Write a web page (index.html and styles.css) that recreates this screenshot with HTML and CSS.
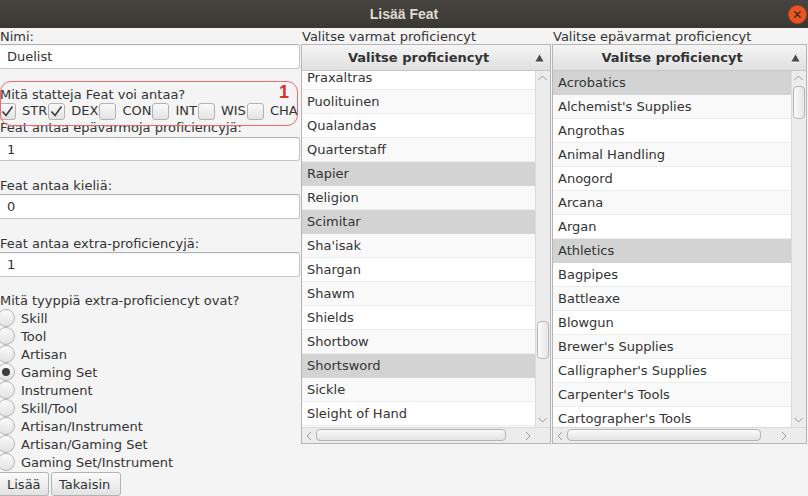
FILE: index.html
```html
<!DOCTYPE html>
<html>
<head>
<meta charset="utf-8">
<link rel="stylesheet" href="styles.css">
</head>
<body>
<div class="window">
  <header class="titlebar">
    <span class="title">Lisää Feat</span>
    <svg class="close" width="19" height="19" viewBox="0 0 19 19"><circle cx="9.5" cy="9.5" r="9" fill="#e95420" stroke="#c7431a" stroke-width="1"/><path d="M6.8 6.8 L12.2 12.2 M12.2 6.8 L6.8 12.2" stroke="#3a2a22" stroke-width="1.4" stroke-linecap="round"/></svg>
  </header>
  <main class="content">
    <section class="left">
      <div class="lbl l-nimi">Nimi:</div>
      <div class="field">Duelist</div>
      <div class="lbl l-stats">Mitä statteja Feat voi antaa?</div>
      <div class="checks">
        <span class="chk"><span class="box first"><svg width="17" height="17" viewBox="0 0 17 17"><path d="M3.5 8.5 L7 12.5 L13.5 3.5" fill="none" stroke="#3a3a3a" stroke-width="1.6"/></svg></span><span class="ctext">STR</span></span>
        <span class="chk"><span class="box"><svg width="17" height="17" viewBox="0 0 17 17"><path d="M3.5 8.5 L7 12.5 L13.5 3.5" fill="none" stroke="#3a3a3a" stroke-width="1.6"/></svg></span><span class="ctext">DEX</span></span>
        <span class="chk"><span class="box"></span><span class="ctext">CON</span></span>
        <span class="chk"><span class="box"></span><span class="ctext">INT</span></span>
        <span class="chk"><span class="box"></span><span class="ctext">WIS</span></span>
        <span class="chk"><span class="box"></span><span class="ctext">CHA</span></span>
      </div>
      <div class="lbl l-epa">Feat antaa epävarmoja proficiencyjä:</div>
      <div class="field f-epa">1</div>
      <div class="lbl l-kieli">Feat antaa kieliä:</div>
      <div class="field f-small">0</div>
      <div class="lbl l-extra">Feat antaa extra-proficiencyjä:</div>
      <div class="field f-small">1</div>
      <div class="lbl l-tyyppi">Mitä tyyppiä extra-proficiencyt ovat?</div>
      <div class="radios">
        <div class="radio"><span class="dot"></span>Skill</div>
        <div class="radio"><span class="dot"></span>Tool</div>
        <div class="radio"><span class="dot"></span>Artisan</div>
        <div class="radio"><span class="dot on"></span>Gaming Set</div>
        <div class="radio"><span class="dot"></span>Instrument</div>
        <div class="radio"><span class="dot"></span>Skill/Tool</div>
        <div class="radio"><span class="dot"></span>Artisan/Instrument</div>
        <div class="radio"><span class="dot"></span>Artisan/Gaming Set</div>
        <div class="radio"><span class="dot"></span>Gaming Set/Instrument</div>
      </div>
      <div class="buttons">
        <button class="btn b-lisaa">Lisää</button>
        <button class="btn b-takaisin">Takaisin</button>
      </div>
      <div class="annot"><span class="annot-num">1</span></div>
    </section>

    <section class="col col-mid">
      <div class="lbl col-lbl">Valitse varmat proficiencyt</div>
      <div class="table">
        <div class="thead"><span class="th-text">Valitse proficiencyt</span><svg class="sort" width="9" height="8" viewBox="0 0 9 8"><path d="M4.5 0.5 L8.5 7.5 L0.5 7.5 Z" fill="#4a4a4a"/></svg></div>
        <div class="tbody">
          <div class="rows-wrap">
            <div class="rows shift">
              <div class="row">Praxaltras</div>
              <div class="row">Puolituinen</div>
              <div class="row">Qualandas</div>
              <div class="row">Quarterstaff</div>
              <div class="row sel">Rapier</div>
              <div class="row">Religion</div>
              <div class="row sel">Scimitar</div>
              <div class="row">Sha'isak</div>
              <div class="row">Shargan</div>
              <div class="row">Shawm</div>
              <div class="row">Shields</div>
              <div class="row">Shortbow</div>
              <div class="row sel">Shortsword</div>
              <div class="row">Sickle</div>
              <div class="row">Sleight of Hand</div>
            </div>
          </div>
          <div class="vscroll">
            <svg class="varrow" width="15" height="14" viewBox="0 0 15 14"><path d="M3.5 9 L7.5 5 L11.5 9" fill="none" stroke="#9a9a9a" stroke-width="1"/></svg>
            <div class="vtrack"><div class="vthumb vt-mid"></div></div>
            <svg class="varrow" width="15" height="14" viewBox="0 0 15 14"><path d="M3.5 5 L7.5 9 L11.5 5" fill="none" stroke="#9a9a9a" stroke-width="1"/></svg>
          </div>
        </div>
        <div class="hscroll">
          <svg class="harrow" width="14" height="16" viewBox="0 0 14 16"><path d="M9 4 L5 8 L9 12" fill="none" stroke="#9a9a9a" stroke-width="1"/></svg>
          <div class="htrack"><div class="hthumb ht-mid"></div></div>
          <svg class="harrow" width="14" height="16" viewBox="0 0 14 16"><path d="M5 4 L9 8 L5 12" fill="none" stroke="#9a9a9a" stroke-width="1"/></svg>
          <div class="corner"></div>
        </div>
      </div>
    </section>

    <section class="col col-right">
      <div class="lbl col-lbl">Valitse epävarmat proficiencyt</div>
      <div class="table">
        <div class="thead"><span class="th-text">Valitse proficiencyt</span><svg class="sort" width="9" height="8" viewBox="0 0 9 8"><path d="M4.5 0.5 L8.5 7.5 L0.5 7.5 Z" fill="#4a4a4a"/></svg></div>
        <div class="tbody">
          <div class="rows-wrap">
            <div class="rows">
              <div class="row sel">Acrobatics</div>
              <div class="row">Alchemist's Supplies</div>
              <div class="row">Angrothas</div>
              <div class="row">Animal Handling</div>
              <div class="row">Anogord</div>
              <div class="row">Arcana</div>
              <div class="row">Argan</div>
              <div class="row sel">Athletics</div>
              <div class="row">Bagpipes</div>
              <div class="row">Battleaxe</div>
              <div class="row">Blowgun</div>
              <div class="row">Brewer's Supplies</div>
              <div class="row">Calligrapher's Supplies</div>
              <div class="row">Carpenter's Tools</div>
              <div class="row">Cartographer's Tools</div>
            </div>
          </div>
          <div class="vscroll">
            <svg class="varrow" width="15" height="14" viewBox="0 0 15 14"><path d="M3.5 9 L7.5 5 L11.5 9" fill="none" stroke="#9a9a9a" stroke-width="1"/></svg>
            <div class="vtrack"><div class="vthumb vt-right"></div></div>
            <svg class="varrow" width="15" height="14" viewBox="0 0 15 14"><path d="M3.5 5 L7.5 9 L11.5 5" fill="none" stroke="#9a9a9a" stroke-width="1"/></svg>
          </div>
        </div>
        <div class="hscroll">
          <svg class="harrow" width="14" height="16" viewBox="0 0 14 16"><path d="M9 4 L5 8 L9 12" fill="none" stroke="#9a9a9a" stroke-width="1"/></svg>
          <div class="htrack"><div class="hthumb ht-right"></div></div>
          <svg class="harrow" width="14" height="16" viewBox="0 0 14 16"><path d="M5 4 L9 8 L5 12" fill="none" stroke="#9a9a9a" stroke-width="1"/></svg>
          <div class="corner"></div>
        </div>
      </div>
    </section>
  </main>
</div>
</body>
</html>
```

FILE: styles.css
```css
* { box-sizing: border-box; }

html, body {
  margin: 0;
  padding: 0;
}

body {
  width: 808px;
  height: 496px;
  overflow: hidden;
  background: #f4f4f4;
  font-family: "DejaVu Sans", "Noto Sans", sans-serif;
  font-size: 13px;
  color: #333333;
}

.window {
  display: flex;
  flex-direction: column;
  height: 496px;
}

.titlebar {
  height: 28px;
  flex: none;
  background: linear-gradient(#45443f, #393834);
  display: flex;
  align-items: center;
  justify-content: center;
  position: relative;
}

.title {
  font-family: "Liberation Sans", Arial, sans-serif;
  font-weight: bold;
  font-size: 14px;
  color: #dfdbd2;
  margin-top: -1px;
}

.close {
  position: absolute;
  right: 1px;
  top: 5px;
}

.content {
  flex: 1;
  display: flex;
  gap: 1px;
  align-items: flex-start;
}

/* ---------- left column ---------- */
.left {
  width: 300px;
  flex: none;
  position: relative;
  display: flex;
  flex-direction: column;
}

.lbl {
  height: 14px;
  line-height: 14px;
  white-space: nowrap;
}

.l-nimi { margin-top: 2px; }
.l-stats { margin-top: 19px; }
.l-epa { margin-top: 1px; }
.l-kieli { margin-top: 18px; }
.l-extra { margin-top: 18px; }
.l-tyyppi { margin-top: 17px; }

.field {
  height: 25px;
  background: #ffffff;
  border: 1px solid #c4c4c4;
  border-top-color: #b0b0b0;
  border-left: none;
  border-radius: 0 3px 3px 0;
  padding-left: 7px;
  line-height: 24px;
  box-shadow: inset 0 1px 1px rgba(0,0,0,0.04);
}

.f-epa { margin-top: 2px; height: 24px; line-height: 23px; }
.f-small { margin-top: 1px; }

.checks {
  height: 18px;
  display: flex;
  align-items: center;
  white-space: nowrap;
  overflow: hidden;
}

.chk {
  display: flex;
  align-items: center;
}

.box {
  width: 17px;
  height: 17px;
  border: 1px solid #b3b3b3;
  border-radius: 3px;
  background: linear-gradient(#fafafa, #e3e3e3);
  display: flex;
  align-items: center;
  justify-content: center;
  flex: none;
}

.box svg { display: block; margin: -1px; }

.box.first { margin-left: -1px; }

.ctext {
  margin-left: 6px;
  margin-right: 1px;
  line-height: 14px;
}

.radios {
  margin-top: 1px;
  display: flex;
  flex-direction: column;
}

.radio {
  height: 18px;
  display: flex;
  align-items: center;
  white-space: nowrap;
}

.dot {
  width: 18px;
  height: 18px;
  border-radius: 50%;
  border: 1px solid #b5b5b5;
  background: linear-gradient(#fafafa, #e2e2e2);
  margin-left: -3px;
  margin-right: 6px;
  flex: none;
  display: flex;
  align-items: center;
  justify-content: center;
}

.dot.on::after {
  content: "";
  width: 8px;
  height: 8px;
  border-radius: 50%;
  background: #3d3d3d;
}

.buttons {
  margin-top: 1px;
  display: flex;
  gap: 2px;
}

.btn {
  height: 24px;
  font-family: "DejaVu Sans", sans-serif;
  font-size: 13px;
  color: #333333;
  background: linear-gradient(#fbfbfb, #e2e2e2);
  border: 1px solid #b3b3b3;
  border-radius: 3px;
  padding: 0 7px;
  margin: 0;
  text-align: left;
}

.b-lisaa { width: 49px; border-left: none; border-radius: 0 3px 3px 0; padding-left: 7px; }
.b-takaisin { width: 70px; }

.annot {
  position: absolute;
  left: 0;
  top: 53px;
  width: 298px;
  height: 45px;
  border: 1.5px solid #ef6a6e;
  border-radius: 11px;
  pointer-events: none;
}

.annot-num {
  position: absolute;
  right: 8px;
  top: 0px;
  font-family: "Liberation Sans", Arial, sans-serif;
  font-weight: bold;
  font-size: 18px;
  line-height: 20px;
  color: #e22b2b;
}

/* ---------- tables ---------- */
.col {
  display: flex;
  flex-direction: column;
}

.col-mid { width: 250px; }
.col-right { width: 255px; }

.col-lbl {
  margin-top: 2px;
  padding-left: 1px;
}

.table {
  height: 400px;
  border: 1px solid #b5b5b5;
  background: #ffffff;
  display: flex;
  flex-direction: column;
}

.thead {
  height: 26px;
  flex: none;
  background: linear-gradient(#f5f5f5, #e0e0e0);
  border-bottom: 1px solid #c6c6c6;
  display: flex;
  align-items: center;
  font-weight: bold;
}

.th-text {
  flex: 1;
  text-align: center;
  white-space: nowrap;
}

.sort {
  margin-right: 6px;
  flex: none;
}

.tbody {
  flex: 1;
  display: flex;
  min-height: 0;
}

.rows-wrap {
  flex: 1;
  overflow: hidden;
  background: #ffffff;
}

.rows.shift { margin-top: -5px; }

.row {
  height: 24px;
  line-height: 23px;
  padding-left: 5px;
  border-bottom: 1px solid #ececec;
  white-space: nowrap;
  background: #ffffff;
}

.row:nth-child(even) { background: #f9f9f9; }
.row.sel { background: #d3d3d3; border-bottom-color: #d3d3d3; }

.vscroll {
  width: 15px;
  flex: none;
  background: #ececec;
  border-left: 1px solid #dadada;
  display: flex;
  flex-direction: column;
}

.varrow { display: block; flex: none; margin-left: -1px; }

.vtrack {
  flex: 1;
  position: relative;
}

.vthumb {
  position: absolute;
  left: 1px;
  width: 12px;
  border: 1px solid #b5b5b5;
  border-radius: 4px;
  background: linear-gradient(90deg, #fafafa, #e6e6e6);
}

.vt-mid { top: 236px; height: 38px; }
.vt-right { top: 1px; height: 33px; }

.hscroll {
  height: 16px;
  flex: none;
  background: #ececec;
  border-top: 1px solid #dadada;
  display: flex;
}

.harrow { display: block; flex: none; }

.htrack {
  flex: 1;
  position: relative;
}

.hthumb {
  position: absolute;
  top: 1px;
  height: 12px;
  left: 0;
  border: 1px solid #b5b5b5;
  border-radius: 4px;
  background: linear-gradient(#fafafa, #e2e2e2);
}

.ht-mid { width: 190px; }
.ht-right { width: 194px; }

.corner {
  width: 15px;
  flex: none;
  background: #ececec;
}
```
